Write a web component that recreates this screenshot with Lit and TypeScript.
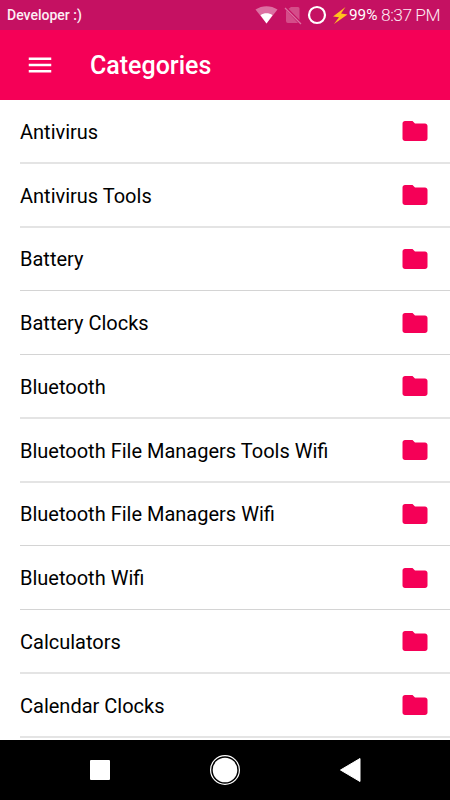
import { LitElement, html, css, svg } from "lit";
import { customElement, property } from "lit/decorators.js";
import { classMap } from "lit/directives/class-map.js";

@customElement("status-bar")
class StatusBar extends LitElement {
  static styles = css`
    :host { display: flex; align-items: center; height: 30px; box-sizing: border-box; background: #c51162; color: #f8dbe8; padding: 0 10px 0 7px; font-size: 13px; }
    .carrier { font-weight: 500; flex: 1; color: #fdeef5; font-size: 14px; line-height: 32px; white-space: nowrap; }
    svg { display: block; flex: none; }
    .wifi { margin-right: 6px; }
    .sim { margin-right: 5px; }
    .ring { margin-right: 5px; }
    .pct { font-size: 15.3px; line-height: 32px; color: #fff; width: 32px; margin-left: 1px; white-space: nowrap; }
    .time { font-size: 17.4px; letter-spacing: -0.5px; font-weight: 300; line-height: 32px; width: 59px; white-space: nowrap; color: #fdeaf3; }
  `;
  render() {
    return html`
      <span class="carrier">Developer :)</span>
      <svg class="wifi" width="23" height="20" viewBox="0 0 23 20">
        <path d="M.5 4.500C7 0 16 0 22.500 4.500L11.500 18.500Z" fill="#dc70a2" />
        <path d="M5.500 10.300C9 7.700 14 7.700 17.500 10.300L11.500 18.500Z" fill="#fff" />
      </svg>
      <svg class="sim" width="18" height="20" viewBox="0 0 18 20">
        <path d="M7 2H14Q15.500 2 15.500 3.500V15L4.500 3.800ZM2.500 5.500 14 18H4Q2 18 2 16V6.500Z" fill="#d44d89" />
        <path d="M1 3 17 19" stroke="#dc70a2" stroke-width="1.300" />
      </svg>
      <svg class="ring" width="20" height="20" viewBox="0 0 20 20">
        <circle cx="10" cy="10" r="8" fill="none" stroke="#fff" stroke-width="2.200" />
      </svg>
      <svg width="16" height="20" viewBox="0 0 16 20">
        <path d="M13.500 2 1 11.500 7 12.300 2 19 15.500 9.500 9 8.500Z" fill="#ffc31e" />
      </svg>
      <span class="pct">99%</span>
      <span class="time">8:37 PM</span>
    `;
  }
}

@customElement("app-header")
class AppHeader extends LitElement {
  static styles = css`
    :host { display: flex; align-items: center; height: 70px; background: #f50057; color: #fff; padding-left: 25px; }
    svg { display: block; margin-right: 35px; }
    .title { font-size: 25px; font-weight: 500; line-height: 70px; padding-top: 2px; }
  `;
  render() {
    return html`
      <svg width="30" height="30" viewBox="0 0 24 24"><path d="M3 18h18v-2H3v2zm0-5h18v-2H3v2zm0-7v2h18V6H3z" fill="#fff" /></svg>
      <span class="title">Categories</span>
    `;
  }
}

@customElement("category-row")
class CategoryRow extends LitElement {
  @property() label = "";
  @property({ type: Boolean }) crisp = false;
  static styles = css`
    :host { display: block; height: 63.78px; padding-left: 20px; box-sizing: border-box; }
    .row { display: flex; align-items: center; justify-content: space-between; height: 100%; box-sizing: border-box; padding: 0 20px 0 0; border-bottom: 2px solid #e4e4e4; }
    .row.crisp { border-bottom: 1px solid #d4d4d4; }
    .label { font-size: 20px; color: #000; white-space: nowrap; padding-top: 2px; }
    .crisp .label { padding-top: 1px; }
    svg { display: block; }
  `;
  render() {
    return html`
      <div class=${classMap({ row: true, crisp: this.crisp })}>
        <span class="label">${this.label}</span>
        <svg width="30" height="30" viewBox="0 0 24 24"><path d="M10 4H4c-1.100 0-1.990.9-1.990 2L2 18c0 1.100.9 2 2 2h16c1.100 0 2-.9 2-2V8c0-1.100-.9-2-2-2h-8l-2-2z" fill="#f50057" /></svg>
      </div>
    `;
  }
}

@customElement("nav-bar")
class NavBar extends LitElement {
  static styles = css`
    :host { display: flex; align-items: center; justify-content: space-between; height: 60px; background: #000; padding: 0 85px; }
    svg { display: block; }
  `;
  render() {
    const shapes = [
      svg`<rect x="5" y="5" width="20" height="20" rx="1" />`,
      svg`<circle cx="15" cy="15" r="14.400" fill="none" stroke="#fff" stroke-width="1.200" /><circle cx="15" cy="15" r="12.300" />`,
      svg`<path d="M5.500 15 25 3.500V26.500Z" stroke="#fff" stroke-width="1" stroke-linejoin="round" />`,
    ];
    return shapes.map((s) => html`<svg width="30" height="30" viewBox="0 0 30 30" fill="#fff">${s}</svg>`);
  }
}

@customElement("app-root")
class AppRoot extends LitElement {
  static styles = css`
    :host { display: flex; flex-direction: column; height: 800px; width: 450px; overflow: hidden; background: #fff; font-family: Roboto, sans-serif; }
    .list { flex: 1; min-height: 0; overflow: hidden; }
    status-bar, app-header, nav-bar { flex: none; }
  `;
  private categories = [
    "Antivirus",
    "Antivirus Tools",
    "Battery",
    "Battery Clocks",
    "Bluetooth",
    "Bluetooth File Managers Tools Wifi",
    "Bluetooth File Managers Wifi",
    "Bluetooth Wifi",
    "Calculators",
    "Calendar Clocks",
  ];
  render() {
    return html`
      <status-bar></status-bar>
      <app-header></app-header>
      <main class="list">
        ${this.categories.map((c, i) => html`<category-row .label=${c} .crisp=${i % 4 >= 2}></category-row>`)}
      </main>
      <nav-bar></nav-bar>
    `;
  }
}
